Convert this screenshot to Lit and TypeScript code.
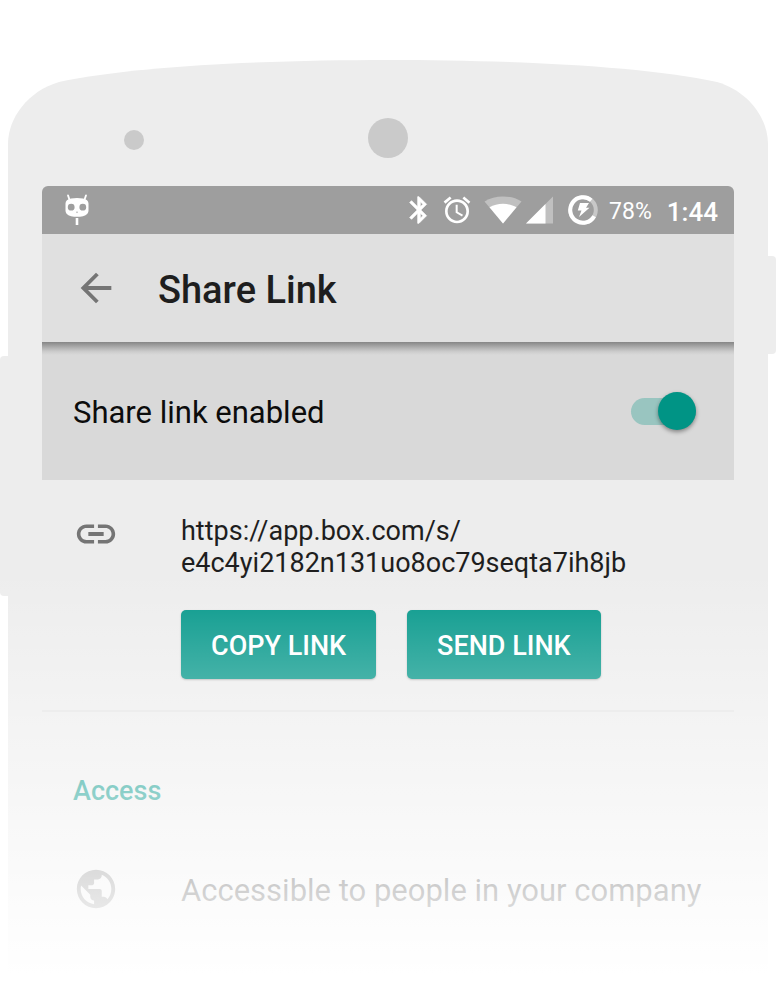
import { LitElement, html, css } from "lit";
import { customElement, state } from "lit/decorators.js";

@customElement("status-bar")
class StatusBar extends LitElement {
  static styles = css`
    :host {
      display: flex;
      align-items: center;
      justify-content: space-between;
      height: 48px;
      box-sizing: border-box;
      padding: 0 16px 0 22px;
      background: #9e9e9e;
      color: #fff;
      border-radius: 6px 6px 0 0;
    }
    svg {
      display: block;
      fill: #fff;
    }
    .tray {
      display: flex;
      align-items: center;
    }
    .bluetooth {
      stroke: #fff;
      stroke-width: 0.5;
    }
    .alarm {
      margin-left: 6px;
    }
    .wifi {
      margin-left: 11px;
    }
    .signal {
      margin: 0 15px 0 4px;
    }
    .dim {
      fill: #c0c0c0;
    }
    .ring {
      fill: none;
      stroke-width: 4;
    }
    .ring-rest {
      stroke: #c8c8c8;
    }
    .ring-level {
      stroke: #fff;
    }
    .battery,
    .clock {
      padding-top: 3px;
      line-height: 32px;
    }
    .battery {
      margin: 0 15px 0 11px;
      font-size: 23px;
    }
    .clock {
      font-size: 26px;
      font-weight: 500;
    }
  `;

  render() {
    return html`
      <svg width="26" height="34" viewBox="0 0 26 34" aria-hidden="true">
        <path
          d="M4 2.400 5.600 7M22 2.400 20.400 7"
          stroke="#fff"
          stroke-width="1.800"
          stroke-linecap="round"
        />
        <path
          fill-rule="evenodd"
          d="M7 5.600C11 4.800 15 4.800 19 5.600c3.500.6 5.500 2.400 5.500 5v7c0 3-2.500 5-5.500 5.600-4 .8-8 .8-12 0C4 22.600 1.500 20.600 1.500 17.600v-7c0-2.600 2-4.400 5.500-5zM7.200 10.800a3.400 3.400 0 1 0 0 6.800 3.400 3.400 0 1 0 0-6.800zM18.800 10.800a3.400 3.400 0 1 0 0 6.800 3.400 3.400 0 1 0 0-6.800zM12 18.800h2l-1 1.400z"
        />
        <path d="M11.700 25h2.600v7h-2.600z" />
      </svg>
      <div class="tray">
        <svg class="bluetooth" width="32" height="32" viewBox="0 0 24 24" aria-hidden="true">
          <path
            d="M17.710 7.710 12 2h-1v7.590L6.410 5 5 6.410 10.590 12 5 17.590 6.410 19 11 14.410V22h1l5.710-5.710-4.300-4.290 4.300-4.290zM13 5.830l1.880 1.880L13 9.590V5.830zm1.880 10.460L13 18.170v-3.760l1.880 1.880z"
          />
        </svg>
        <svg class="alarm" width="32" height="32" viewBox="0 0 24 24" aria-hidden="true">
          <path
            d="M22 5.720l-4.600-3.860-1.290 1.530 4.600 3.860L22 5.720zM7.880 3.390L6.600 1.860 2 5.710l1.290 1.530 4.590-3.850zM12.500 8H11v6l4.750 2.850.75-1.230-4-2.370V8zM12 4c-4.970 0-9 4.030-9 9s4.020 9 9 9a9 9 0 0 0 0-18zm0 16c-3.870 0-7-3.130-7-7s3.130-7 7-7 7 3.130 7 7-3.130 7-7 7z"
          />
        </svg>
        <svg class="wifi" width="38" height="28" viewBox="0 0 38 28" aria-hidden="true">
          <path class="dim" d="M19 27.500 .5 5.500C6 2 12 .5 19 .5S32 2 37.500 5.500z" />
          <path d="M19 27.500 5.500 11.200C9.500 9 14 7.800 19 7.800s9.500 1.200 13.500 3.400z" />
        </svg>
        <svg class="signal" width="27" height="28" viewBox="0 0 27 28" aria-hidden="true">
          <path class="dim" d="M27 .5v27H0z" />
          <path d="M19.500 8v19.500H0z" />
        </svg>
        <svg width="30" height="30" viewBox="0 0 30 30" aria-hidden="true">
          <circle class="ring ring-rest" cx="15" cy="15" r="12.800" />
          <path class="ring ring-level" d="M26.200 21.200A12.800 12.800 0 1 1 23.200 5.200" />
          <path d="M12 8h9l-3 4.800h3.500L11 22l2.500-6.500H9.800z" />
        </svg>
        <span class="battery">78%</span>
        <span class="clock">1:44</span>
      </div>
    `;
  }
}

@customElement("share-link-screen")
class ShareLinkScreen extends LitElement {
  static styles = css`
    :host {
      display: block;
    }
    .icon {
      display: block;
      width: 46px;
      height: 46px;
      flex: none;
      fill: #757575;
    }
    .toolbar {
      position: relative;
      display: flex;
      align-items: center;
      gap: 39px;
      height: 108px;
      padding: 0 31px;
      background: #e0e0e0;
    }
    .toolbar::after {
      content: "";
      position: absolute;
      top: 100%;
      left: 0;
      right: 0;
      height: 13px;
      background: linear-gradient(#868686, #adadad 40%, #cdcdcd 75%, #d9d9d9);
    }
    .back {
      padding: 0;
      border: 0;
      background: none;
      cursor: pointer;
    }
    h1 {
      margin: 0;
      padding-top: 3px;
      font-size: 38px;
      line-height: 46px;
      font-weight: 500;
      color: #1e1e1e;
    }
    .enable {
      display: flex;
      align-items: center;
      justify-content: space-between;
      height: 138px;
      padding: 0 38px 0 31px;
      background: #d9d9d9;
      color: #0c0c0c;
      font-size: 31px;
      line-height: 38px;
    }
    .enable label,
    .access span {
      padding-top: 3px;
    }
    .switch {
      appearance: none;
      position: relative;
      display: flex;
      align-items: center;
      width: 65px;
      height: 38px;
      margin: 0;
      cursor: pointer;
    }
    .switch::before {
      content: "";
      flex: 1;
      height: 27px;
      border-radius: 14px;
      background: #b5b5b5;
    }
    .switch::after {
      content: "";
      position: absolute;
      left: 0;
      width: 38px;
      height: 38px;
      border-radius: 50%;
      background: #f5f5f5;
      box-shadow: 0 2px 4px rgba(0, 0, 0, 0.4);
    }
    .switch:checked::before {
      background: #99c5c0;
    }
    .switch:checked::after {
      left: auto;
      right: 0;
      background: #009485;
    }
    .link {
      display: flex;
      gap: 62px;
      padding: 35px 31px 31px;
      border-bottom: 2px solid #e4e4e4;
    }
    .link .icon {
      margin-top: -4px;
    }
    .url {
      display: block;
      color: #1e1e1e;
      font-size: 27px;
      line-height: 32px;
      text-decoration: none;
    }
    .actions {
      display: flex;
      gap: 31px;
      margin-top: 31px;
    }
    .action {
      height: 69px;
      padding: 3px 30px 0;
      border: 0;
      border-radius: 5px;
      background: #009688;
      color: #fff;
      font: 500 27px/32px Roboto, sans-serif;
      white-space: nowrap;
      box-shadow: 0 1px 2px rgba(0, 0, 0, 0.25);
      cursor: pointer;
    }
    h2 {
      margin: 0;
      padding: 63px 31px 0;
      font-size: 27px;
      line-height: 32px;
      font-weight: 500;
      color: #009688;
    }
    .access {
      display: flex;
      align-items: center;
      gap: 62px;
      padding: 59px 31px;
      font-size: 31px;
      line-height: 38px;
      color: #1e1e1e;
    }
  `;

  @state() private enabled = true;

  private toggle(e: Event) {
    this.enabled = (e.target as HTMLInputElement).checked;
  }

  render() {
    return html`
      <header class="toolbar">
        <button class="back" aria-label="Back">
          <svg class="icon" viewBox="0 0 24 24" aria-hidden="true">
            <path d="M20 11H7.830l5.590-5.590L12 4l-8 8 8 8 1.410-1.410L7.830 13H20v-2z" />
          </svg>
        </button>
        <h1>Share Link</h1>
      </header>
      <div class="enable">
        <label for="enabled">Share link enabled</label>
        <input
          id="enabled"
          class="switch"
          type="checkbox"
          role="switch"
          .checked=${this.enabled}
          @change=${this.toggle}
        />
      </div>
      <section class="link">
        <svg class="icon" viewBox="0 0 24 24" aria-hidden="true">
          <path
            d="M3.900 12c0-1.710 1.390-3.100 3.100-3.100h4V7H7c-2.760 0-5 2.240-5 5s2.240 5 5 5h4v-1.900H7c-1.710 0-3.100-1.390-3.100-3.100zM8 13h8v-2H8v2zm9-6h-4v1.900h4c1.710 0 3.100 1.390 3.100 3.100s-1.390 3.100-3.100 3.100h-4V17h4c2.760 0 5-2.240 5-5s-2.240-5-5-5z"
          />
        </svg>
        <div>
          <a class="url" href="https://app.box.com/s/e4c4yi2182n131uo8oc79seqta7ih8jb"
            >https://app.box.com/s/<wbr />e4c4yi2182n131uo8oc79seqta7ih8jb</a
          >
          <div class="actions">
            <button class="action">COPY LINK</button>
            <button class="action">SEND LINK</button>
          </div>
        </div>
      </section>
      <section>
        <h2>Access</h2>
        <div class="access">
          <svg class="icon" viewBox="0 0 24 24" aria-hidden="true">
            <path
              d="M12 2C6.480 2 2 6.480 2 12s4.480 10 10 10 10-4.480 10-10S17.520 2 12 2zm-1 17.930c-3.950-.49-7-3.850-7-7.930 0-.62.080-1.210.21-1.790L9 15v1c0 1.100.9 2 2 2v1.930zm6.900-2.540c-.26-.81-1-1.390-1.900-1.390h-1v-3c0-.55-.45-1-1-1H8v-2h2c.55 0 1-.45 1-1V7h2c1.100 0 2-.9 2-2v-.41c2.930 1.190 5 4.060 5 7.410 0 2.080-.8 3.970-2.100 5.390z"
            />
          </svg>
          <span>Accessible to people in your company</span>
        </div>
      </section>
    `;
  }
}

@customElement("app-root")
class AppRoot extends LitElement {
  static styles = css`
    :host {
      display: block;
      background: #fff;
      font-family: Roboto, sans-serif;
      min-height: 100vh;
      overflow: hidden;
    }
    .phone {
      position: relative;
      padding: 60px 8px 0;
    }
    .cap {
      display: block;
      width: 100%;
      height: 100px;
      fill: #ededed;
    }
    .top {
      position: relative;
    }
    .sensor,
    .camera {
      position: absolute;
      border-radius: 50%;
      background: #cacaca;
    }
    .sensor {
      width: 20px;
      height: 20px;
      left: 116px;
      top: 70px;
    }
    .camera {
      width: 40px;
      height: 40px;
      left: calc(50% - 20px);
      top: 58px;
    }
    .body {
      padding: 26px 34px 60px;
      background: #ededed;
    }
    .side {
      position: absolute;
      width: 8px;
      background: #ededed;
    }
    .volume {
      left: 0;
      top: 356px;
      height: 240px;
      border-radius: 4px 0 0 4px;
    }
    .power {
      right: 0;
      top: 256px;
      height: 98px;
      border-radius: 0 4px 4px 0;
    }
    .fade {
      position: absolute;
      left: 0;
      right: 0;
      top: 570px;
      bottom: 0;
      background: linear-gradient(rgba(255, 255, 255, 0), #fff 405px);
      pointer-events: none;
    }
  `;

  render() {
    return html`
      <main class="phone">
        <div class="top">
          <svg class="cap" viewBox="0 0 760 100" preserveAspectRatio="none" aria-hidden="true">
            <path
              d="M0 100V84C0 58 20 31 51 22C130 5 270 0 380 0S630 5 709 22C740 31 760 58 760 84V100z"
            />
          </svg>
          <span class="sensor"></span>
          <span class="camera"></span>
        </div>
        <div class="body">
          <status-bar></status-bar>
          <share-link-screen></share-link-screen>
        </div>
        <span class="side volume"></span>
        <span class="side power"></span>
        <div class="fade"></div>
      </main>
    `;
  }
}
